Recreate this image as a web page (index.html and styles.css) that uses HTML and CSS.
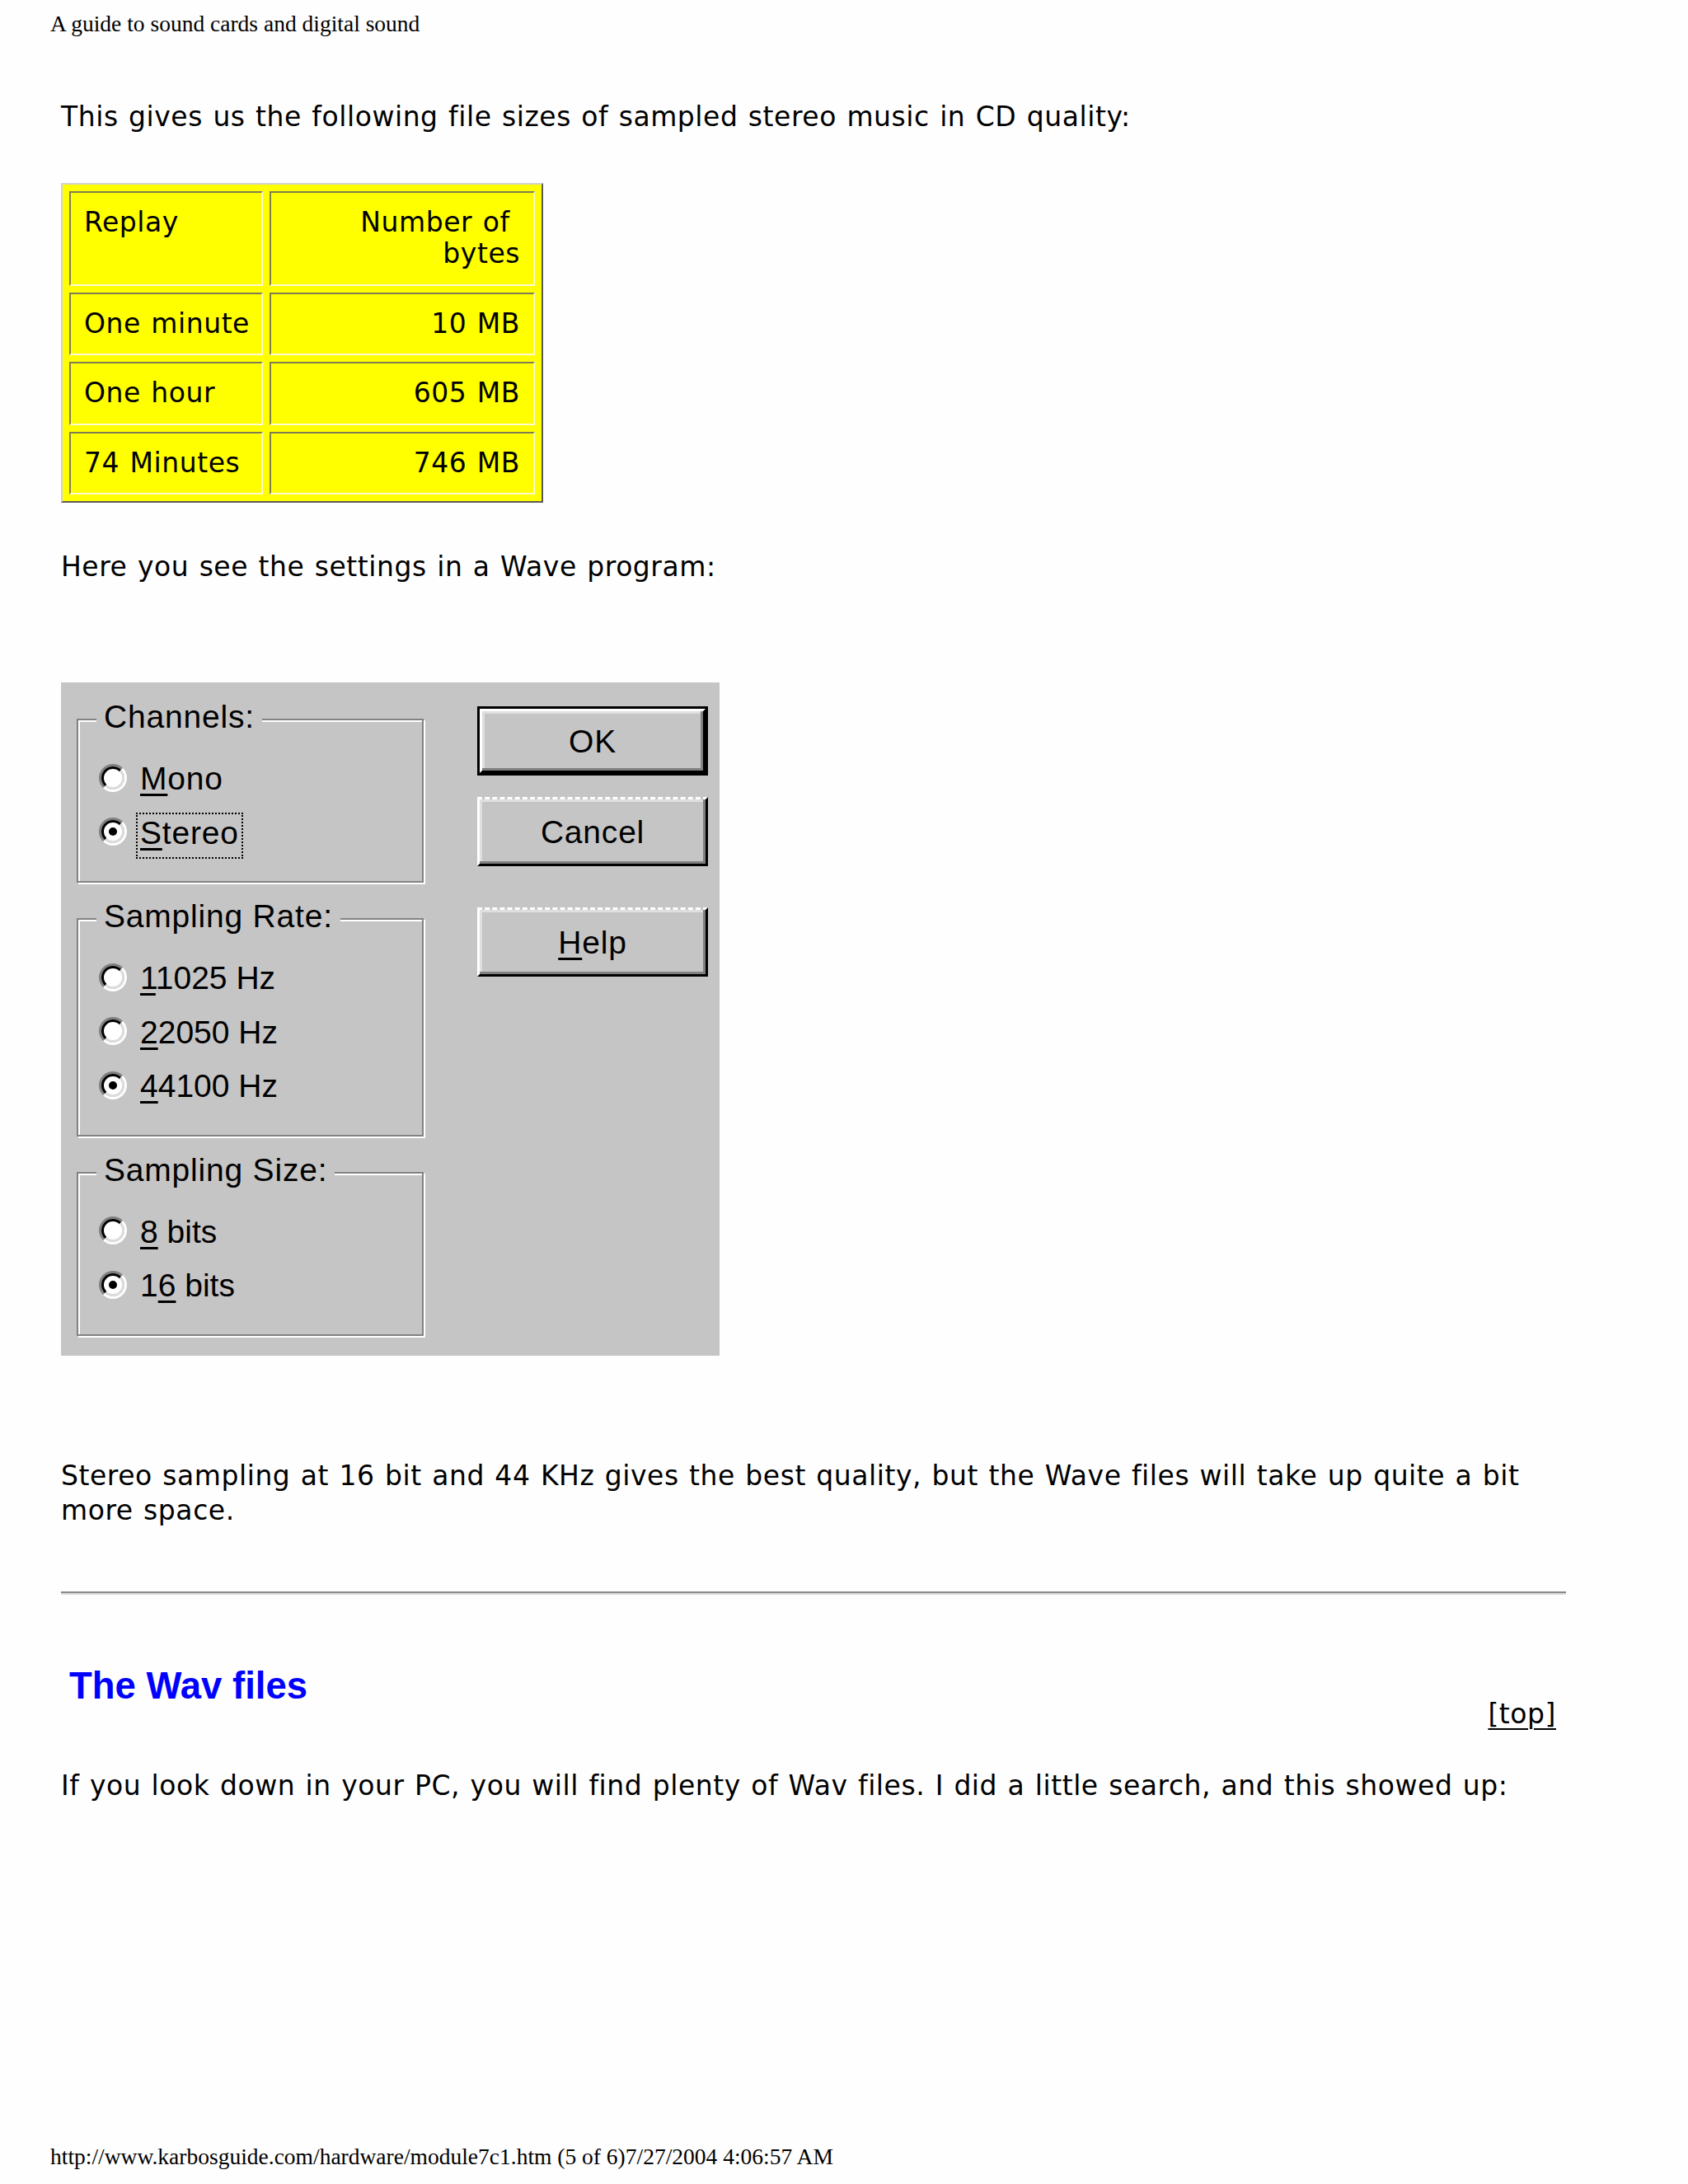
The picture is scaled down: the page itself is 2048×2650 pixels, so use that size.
FILE: index.html
```html
<!DOCTYPE html>
<html lang="en">
<head>
<meta charset="utf-8">
<title>A guide to sound cards and digital sound</title>
<link rel="stylesheet" href="styles.css">
</head>
<body>
<div class="page">
  <div class="print-head">A guide to sound cards and digital sound</div>

  <main class="content">
    <p class="text p1">This gives us the following file sizes of sampled stereo music in CD quality:</p>

    <table class="sizes">
      <tr>
        <td class="c1 top">Replay</td>
        <td class="c2 top">Number of&nbsp;<br>bytes</td>
      </tr>
      <tr>
        <td class="c1">One minute</td>
        <td class="c2">10 MB</td>
      </tr>
      <tr>
        <td class="c1">One hour</td>
        <td class="c2">605 MB</td>
      </tr>
      <tr>
        <td class="c1">74 Minutes</td>
        <td class="c2">746 MB</td>
      </tr>
    </table>

    <p class="text p2">Here you see the settings in a Wave program:</p>

    <div class="dialog">
      <div class="groups">
        <div class="group">
          <span class="legend">Channels:</span>
          <div class="row"><span class="radio"><span class="radio-in"></span></span><span class="lbl"><u>M</u>ono</span></div>
          <div class="row"><span class="radio on"><span class="radio-in"></span></span><span class="lbl"><span class="focus"><u>S</u>tereo</span></span></div>
        </div>
        <div class="group">
          <span class="legend">Sampling Rate:</span>
          <div class="row"><span class="radio"><span class="radio-in"></span></span><span class="lbl num"><u>1</u>1025 Hz</span></div>
          <div class="row"><span class="radio"><span class="radio-in"></span></span><span class="lbl num"><u>2</u>2050 Hz</span></div>
          <div class="row"><span class="radio on"><span class="radio-in"></span></span><span class="lbl num"><u>4</u>4100 Hz</span></div>
        </div>
        <div class="group">
          <span class="legend">Sampling Size:</span>
          <div class="row"><span class="radio"><span class="radio-in"></span></span><span class="lbl num"><u>8</u> bits</span></div>
          <div class="row"><span class="radio on"><span class="radio-in"></span></span><span class="lbl num">1<u>6</u> bits</span></div>
        </div>
      </div>
      <div class="buttons">
        <div class="btn default">OK</div>
        <div class="btn cancel">Cancel</div>
        <div class="btn help"><u>H</u>elp</div>
      </div>
    </div>

    <p class="text p3">Stereo sampling at 16 bit and 44 KHz gives the best quality, but the Wave files will take up quite a bit more space.</p>

    <hr class="rule">

    <div class="section-head">
      <h2 class="section-title">The Wav files</h2>
      <a class="top-link" href="#">[top]</a>
    </div>

    <p class="text p4">If you look down in your PC, you will find plenty of Wav files. I did a little search, and this showed up:</p>
  </main>

  <div class="print-foot">http://www.karbosguide.com/hardware/module7c1.htm (5 of 6)7/27/2004 4:06:57 AM</div>
</div>
</body>
</html>
```

FILE: styles.css
```css
html, body {
  margin: 0;
  padding: 0;
  background: #fefefe;
}

.page {
  width: 2048px;
  color: #000;
}

.print-head,
.print-foot {
  font-family: "Liberation Serif", "Times New Roman", serif;
  font-size: 27.5px;
  line-height: 31px;
  padding-left: 61px;
}

.print-head {
  padding-top: 13px;
}

.print-foot {
  margin-top: 413px;
}

.content {
  margin-left: 74px;
  width: 1826px;
}

.text {
  font-family: "DejaVu Sans", Verdana, sans-serif;
  font-size: 33px;
  line-height: 42px;
  letter-spacing: 0.55px;
  word-spacing: 1.4px;
  margin: 0;
}

.p1 { margin-top: 77px; }
.p2 { margin-top: 57px; }
.p3 { margin-top: 125px; }
.p4 { margin-top: 45px; }

/* ---------- yellow table ---------- */
.sizes {
  margin-top: 59px;
  width: 585px;
  table-layout: fixed;
  border-collapse: separate;
  border-spacing: 8px;
  background: #ffff00;
  border: 2px solid;
  border-color: #d2d2d2 #5a5a5a #5a5a5a #d2d2d2;
  font-family: "DejaVu Sans", Verdana, sans-serif;
  font-size: 33px;
  line-height: 38.4px;
  letter-spacing: 0.55px;
  word-spacing: 1.4px;
}

.sizes td {
  padding: 17px 16px;
  border: 2px solid;
  border-color: #7e7e55 #fffbd6 #fffbd6 #7e7e55;
  white-space: nowrap;
}

.sizes td.top {
  vertical-align: top;
}

.sizes .c1 {
  width: 199px;
  text-align: left;
}

.sizes .c2 {
  width: 286px;
  text-align: right;
}

/* ---------- dialog ---------- */
.dialog {
  margin-top: 119px;
  width: 799px;
  box-sizing: border-box;
  padding: 29px 14px 24px 19px;
  background: #c6c5c6;
  display: flex;
  align-items: flex-start;
  font-family: "Liberation Sans", Arial, sans-serif;
  font-size: 39px;
  letter-spacing: 0.8px;
  color: #000;
}

.groups {
  margin-top: 15px;
  width: 421px;
  display: flex;
  flex-direction: column;
  gap: 43px;
}

.group {
  border: 2px solid #828282;
  box-shadow: inset 2px 2px 0 #fff, 2px 2px 0 #fff;
  padding: 0 0 26px 0;
}

.legend {
  display: block;
  width: fit-content;
  margin: -27px 0 0 22px;
  padding: 0 9px;
  background: #c6c5c6;
  line-height: 45px;
}

.row {
  margin-top: 20px;
  height: 65.5px;
  line-height: 65.5px;
  display: flex;
  align-items: center;
  padding-left: 25px;
}

.row + .row {
  margin-top: 0;
}

.radio {
  width: 34px;
  height: 34px;
  margin-top: -2px;
  box-sizing: border-box;
  border-radius: 50%;
  border: 3px solid;
  border-color: #808080 #fff #fff #808080;
  flex: none;
}

.radio-in {
  display: flex;
  align-items: center;
  justify-content: center;
  width: 100%;
  height: 100%;
  box-sizing: border-box;
  border-radius: 50%;
  border: 3px solid;
  border-color: #000 #dcdcdc #dcdcdc #000;
  background: #fff;
}

.radio.on .radio-in::after {
  content: "";
  width: 10px;
  height: 10px;
  border-radius: 50%;
  background: #000;
}

.lbl {
  margin-left: 16px;
}

.lbl.num {
  letter-spacing: 0;
}

.dialog u {
  text-decoration-thickness: 3px;
  text-underline-offset: 5px;
}

.focus {
  border: 2px dotted #000;
  padding: 1px 3px 8px 3px;
  margin-left: -5px;
}

.buttons {
  margin-left: 65px;
  display: flex;
  flex-direction: column;
}

.btn {
  width: 280px;
  height: 84px;
  box-sizing: border-box;
  border: 3px solid;
  border-color: #fff #000 #000 #fff;
  box-shadow: inset -3px -3px 0 #808080, inset 3px 3px 0 #dfdfdf;
  display: flex;
  align-items: center;
  justify-content: center;
  line-height: 45px;
}

.btn.default {
  width: 274px;
  height: 78px;
  margin: 3px;
  outline: 3px solid #000;
}

.btn.cancel {
  margin-top: 26px;
  border-top-style: dashed;
}

.btn.help {
  margin-top: 50px;
  border-top-style: dashed;
}

/* ---------- rule & heading ---------- */
.rule {
  margin: 77px 0 0 0;
  height: 0;
  border: 0;
  border-top: 2px solid #8a8a8a;
  border-bottom: 2px solid #d9d9d9;
}

.section-head {
  margin-top: 85px;
  display: flex;
  justify-content: space-between;
  align-items: flex-start;
}

.section-title {
  margin: 0;
  padding-left: 10px;
  font-family: "Liberation Sans", Arial, sans-serif;
  font-weight: bold;
  font-size: 45.5px;
  line-height: 52px;
  color: #0000ff;
}

.top-link {
  margin-top: 39px;
  margin-right: 12px;
  font-family: "DejaVu Sans", Verdana, sans-serif;
  font-size: 33px;
  line-height: 42px;
  letter-spacing: 0.55px;
  color: #000;
  text-decoration: underline;
  text-decoration-thickness: 2px;
  text-underline-offset: 6px;
}
```
